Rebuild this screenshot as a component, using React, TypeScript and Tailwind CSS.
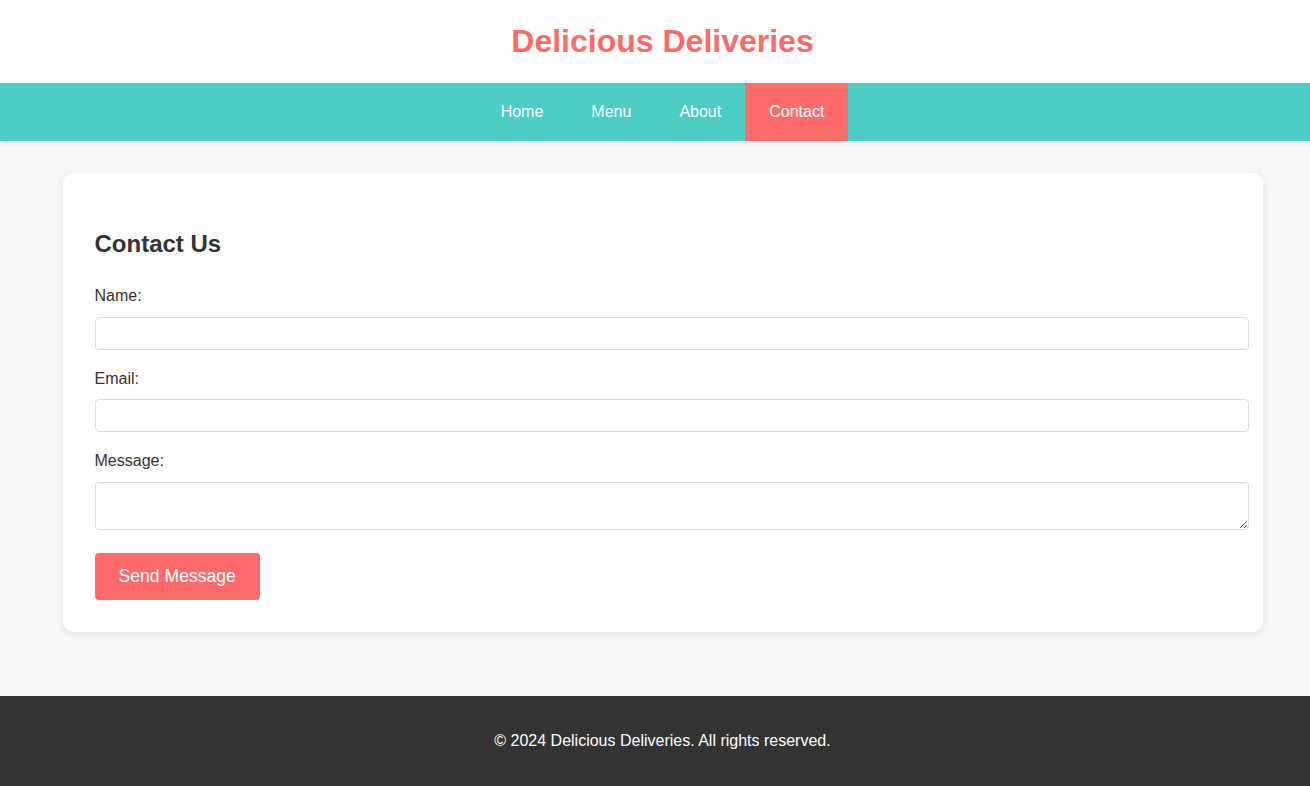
const navLinks = ["Home", "Menu", "About", "Contact"];

const App = () => {
  return (
    <div className="w-full overflow-hidden">
      <div className="w-[1325px] min-h-screen flex flex-col bg-[#f8f9fa] text-[#333] text-base leading-[1.6] font-['Liberation_Sans',Arial,sans-serif]">
        <header className="bg-white py-4 text-center">
          <h1 className="text-[32px] font-bold text-[#ff6b6b] leading-[1.6]">Delicious Deliveries</h1>
        </header>

        <nav className="bg-[#4ecdc4] shadow-[0_2px_5px_rgba(0,0,0,0.1)]">
          <ul className="flex justify-center">
            {navLinks.map((link) => (
              <li key={link}>
                <a
                  href="#"
                  className={`block px-6 py-4 text-white ${
                    link === "Contact" ? "bg-[#ff6b6b]" : ""
                  }`}
                >
                  {link}
                </a>
              </li>
            ))}
          </ul>
        </nav>

        <main className="flex-1 pt-8 pb-16">
          <section className="w-[1200px] mx-auto bg-white rounded-[10px] shadow-[0_2px_10px_rgba(0,0,0,0.1)] p-8">
            <h2 className="text-[24px] font-bold my-5 leading-[1.6]">Contact Us</h2>
            <form onSubmit={(e) => e.preventDefault()}>
              <label className="block mb-2">Name:</label>
              <input
                type="text"
                className="block w-[calc(100%+18px)] h-[33px] mb-4 px-2 border border-[#ddd] rounded-[4px] bg-white"
              />
              <label className="block mb-2">Email:</label>
              <input
                type="email"
                className="block w-[calc(100%+18px)] h-[33px] mb-4 px-2 border border-[#ddd] rounded-[4px] bg-white"
              />
              <label className="block mb-2">Message:</label>
              <textarea className="block w-[calc(100%+18px)] h-12 p-2 border border-[#ddd] rounded-[4px] bg-white resize-y" />
              <button
                type="submit"
                className="mt-[23px] h-[47px] px-6 bg-[#ff6b6b] text-white text-[17.6px] leading-[1.6] rounded-[4px]"
              >
                Send Message
              </button>
            </form>
          </section>
        </main>

        <footer className="bg-[#333] text-white text-center py-8">
          <p>© 2024 Delicious Deliveries. All rights reserved.</p>
        </footer>
      </div>
    </div>
  );
};

export default App;
